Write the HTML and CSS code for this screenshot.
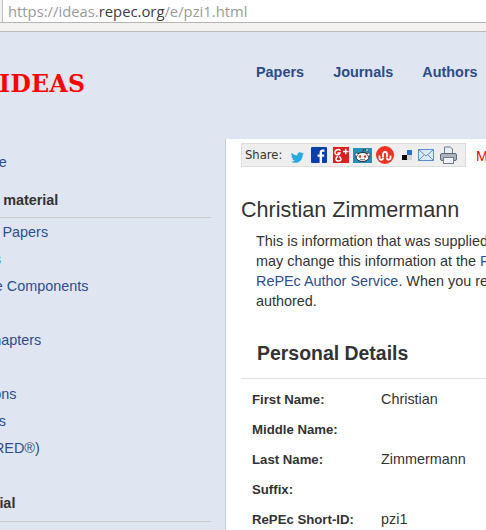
FILE: index.html
```html
<!DOCTYPE html>
<html lang="en">
<head>
<meta charset="utf-8">
<title>Christian Zimmermann | IDEAS/RePEc</title>
<link rel="stylesheet" href="styles.css">
</head>
<body>
<div class="chrome">
  <div class="urlbar"><span class="url">https://ideas.<span class="domain">repec.org</span>/e/pzi1.html</span></div>
</div>
<div class="toolstrip"></div>
<div class="page">
  <header class="masthead">
    <div class="logo">IDEAS</div>
    <nav class="topnav"><a>Papers</a><a>Journals</a><a>Authors</a></nav>
  </header>
  <div class="columns">
    <aside class="sidebar">
      <a class="side-link first">Welcome</a>
      <h4 class="side-head">Author material</h4>
      <a class="side-link">Working Papers</a>
      <a class="side-link fringe">Lectures</a>
      <a class="side-link">Software Components</a>
      <a class="side-link">&nbsp;</a>
      <a class="side-link">Book Chapters</a>
      <a class="side-link">&nbsp;</a>
      <a class="side-link">Collections</a>
      <a class="side-link">Rankings</a>
      <a class="side-link">Data (FRED®)</a>
      <h4 class="side-head lower">Financial</h4>
      <a class="side-link">Data Classification</a>
    </aside>
    <main class="content">
      <div class="sharebar">
        <div class="share">
          <span class="share-label">Share:</span>
          <svg class="ic tw" width="13" height="11" viewBox="0 0 16 13"><path fill="#29a9e1" d="M16 1.600c-.6.3-1.200.4-1.900.5.7-.4 1.200-1 1.400-1.800-.6.4-1.300.6-2 .8C12.900.4 12 0 11 0 9.200 0 7.700 1.500 7.700 3.300c0 .3 0 .5.1.7C5.100 3.900 2.600 2.600 1 .6.700 1.100.5 1.700.5 2.300c0 1.100.6 2.100 1.500 2.700-.5 0-1-.2-1.500-.4 0 1.600 1.100 2.900 2.600 3.200-.5.1-1 .2-1.500.1.400 1.300 1.600 2.200 3 2.300C3.500 11.200 1.800 11.700 0 11.500 1.500 12.500 3.200 13 5 13c6 0 9.400-5 9.400-9.400v-.4c.7-.4 1.200-1 1.600-1.600z"/></svg>
          <svg class="ic fb" width="16" height="16" viewBox="0 0 16 16"><rect width="16" height="16" rx="1" fill="#0b3fb0"/><path fill="#fff" d="M11 16V9.800h2l.3-2.400H11V5.900c0-.7.200-1.200 1.200-1.200h1.200V2.600c-.3 0-1-.1-1.800-.1-1.800 0-3 1.100-3 3.100v1.800H6.600v2.400h2V16z"/></svg>
          <svg class="ic gp" width="16" height="16" viewBox="0 0 16 16"><rect width="16" height="16" fill="#d9201f"/><path fill="none" stroke="#fff" stroke-width="1.500" d="M7.500 3.500C6 1.800 2 2.400 2 5.500c0 3 4.500 3 5 .5H4.500M10 4.500h5.500M12.700 1.800v5.400M5 9.500c-2.500.5-3 4.500.5 4.500s3-3 .5-4.500"/></svg>
          <svg class="ic rd" width="19" height="15" viewBox="0 0 19 15"><rect width="19" height="15" fill="#2a8fb8"/><ellipse cx="9.500" cy="9" rx="6.500" ry="4.500" fill="#fff" stroke="#222"/><circle cx="3.500" cy="6.500" r="1.500" fill="#fff" stroke="#222" stroke-width=".6"/><circle cx="15.500" cy="6.500" r="1.500" fill="#fff" stroke="#222" stroke-width=".6"/><circle cx="7" cy="8.500" r="1.200" fill="#e0301e"/><circle cx="12" cy="8.500" r="1.200" fill="#e0301e"/><circle cx="14" cy="2" r="1.200" fill="#fff" stroke="#222" stroke-width=".5"/><path fill="none" stroke="#222" stroke-width=".7" d="M9.500 4.500 10.500 1.500 13 2M7 11c1.500 1 3.500 1 5 0"/></svg>
          <svg class="ic su" width="18" height="18" viewBox="0 0 18 18"><circle cx="9" cy="9" r="9" fill="#eb3223"/><path fill="none" stroke="#fff" stroke-width="1.800" d="M3.500 12V9.500M7 11.500V8a2 2 0 0 1 4 0v3.500M14.500 9.500V12M3.500 12a1.700 1.700 0 0 0 3.500 0M11 12a1.700 1.700 0 0 0 3.500 0"/></svg>
          <svg class="ic dl" width="10" height="10" viewBox="0 0 10 10"><rect x="5" width="5" height="5" fill="#2a6fd0"/><rect y="5" width="5" height="5" fill="#000"/><rect x="5" y="5" width="5" height="5" fill="#d4d4d4"/></svg>
          <svg class="ic ml" width="16" height="12" viewBox="0 0 16 12"><rect x=".5" y=".5" width="15" height="11" fill="#dce9f7" stroke="#5b8fc9"/><path fill="none" stroke="#5b8fc9" d="M1 1l7 6 7-6M1 11l5-5M15 11l-5-5"/></svg>
          <svg class="ic" width="17" height="18" viewBox="0 0 17 18"><path fill="#e6eef6" stroke="#6f7d8c" d="M4.500 8V1h6l2 2v5z"/><rect x=".5" y="7.500" width="16" height="7" rx="1.500" fill="#aab3bb" stroke="#5f6a74"/><rect x="3.500" y="11.500" width="10" height="6" fill="#f2f4f6" stroke="#6f7d8c"/></svg>
        </div>
        <span class="more">More</span>
      </div>
      <h1 class="name">Christian Zimmermann</h1>
      <p class="intro">This is information that was supplied by Christian Zimmermann in registering through<br>may change this information at the <a>RePEc Author Service</a>. Or, if you are not registered, the<br><a>RePEc Author Service</a>. When you register, you can claim papers you have<br>authored.</p>
      <h2 class="section">Personal Details</h2>
      <dl class="details">
        <dt>First Name:</dt><dd>Christian</dd>
        <dt>Middle Name:</dt><dd></dd>
        <dt>Last Name:</dt><dd>Zimmermann</dd>
        <dt>Suffix:</dt><dd></dd>
        <dt>RePEc Short-ID:</dt><dd>pzi1</dd>
      </dl>
    </main>
  </div>
</div>
</body>
</html>
```

FILE: styles.css
```css
html, body { margin: 0; padding: 0; }
body {
  width: 486px;
  height: 530px;
  overflow: hidden;
  background: #dfe6f1;
  font-family: "Liberation Sans", Arial, sans-serif;
  font-size: 14.4px;
  color: #333;
}
.chrome { background: #f2f1f0; padding-left: 2px; border-bottom: 1px solid #b5b5b3; }
.urlbar {
  height: 22px;
  background: #fff;
  border-left: 1px solid #c4c4c2;
  padding-left: 5px;
  line-height: 22px;
  white-space: nowrap;
  overflow: hidden;
}
.url { font-family: "Open Sans", sans-serif; font-size: 14.8px; color: #9a9a9a; }
.domain { color: #3c3c3c; }
.toolstrip { height: 8px; background: #f2f1f0; border-bottom: 1px solid #b9b9b7; }
.page { margin-left: -53px; width: 1100px; }
.masthead { display: flex; height: 107px; }
.logo {
  width: 279px;
  padding-top: 37px;
  font-family: "DejaVu Serif", serif;
  font-weight: 700;
  font-size: 23.5px;
  letter-spacing: .4px;
  line-height: 30px;
  color: #f00;
  text-indent: 52px;
}
.topnav { display: flex; gap: 29.2px; padding: 31px 0 0 30px; font-weight: 700; line-height: 18px; color: #2d4a86; }
.columns { display: flex; }
.sidebar { width: 278px; flex: none; box-sizing: border-box; padding: 13px 14px 0 0; display: flex; flex-direction: column; }
.side-link { display: block; height: 27px; margin-left: -1px; line-height: 20px; color: #2c4d8e; white-space: nowrap; flex: none; }
.fringe { color: #3f9ff5; }
.first { margin-bottom: 1px; margin-left: 0; }
.side-head { margin: 10px 0 4px; height: 27px; padding-left: 5px; line-height: 20px; font-size: 14.4px; font-weight: 700; color: #333; border-bottom: 1px solid #ccc; flex: none; }
.lower { margin-top: 28px; height: 28px; padding-left: 6px; }
.content { width: 760px; background: #fff; border-left: 1px solid #c8ccd2; height: 400px; padding-left: 15px; box-sizing: border-box; }
.sharebar { display: flex; align-items: flex-start; height: 29px; padding-top: 4px; box-sizing: border-box; }
.share { display: flex; align-items: center; width: 225px; height: 24px; box-sizing: border-box; background: #eee; border: 1px solid #ddd; padding-left: 3px; }
.share-label { font-family: "DejaVu Sans", sans-serif; font-size: 11.6px; margin-right: 9px; }
.ic { display: block; flex: none; }
.tw { margin: 5px 7px 0 0; }
.fb { margin-right: 6px; }
.gp { margin-right: 4px; }
.rd { margin-right: 4px; }
.su { margin-right: 8px; }
.dl { margin-right: 6px; }
.ml { margin-right: 6px; }
.more { margin: 5px 0 0 10px; color: #f00; }
.name { margin: 27px 0 0; font-size: 21.6px; font-weight: 400; line-height: 30px; color: #333; }
.intro { margin: 6px 0 0 15px; width: 700px; line-height: 20px; color: #333; }
.intro a { color: #2c4d8e; }
.section { margin: 29px 0 0 16px; font-size: 19.44px; font-weight: 700; line-height: 26px; color: #333; width: 400px; }
.details { display: grid; grid-template-columns: 129px 1fr; margin: 12px 0 0 0; padding: 11px 0 0 11px; border-top: 1px solid #e0e0e0; row-gap: 10px; line-height: 20px; }
.details dt { font-size: 13.2px; font-weight: 700; color: #333; }
.details dd { margin: -1px 0 1px; min-height: 20px; }
```
